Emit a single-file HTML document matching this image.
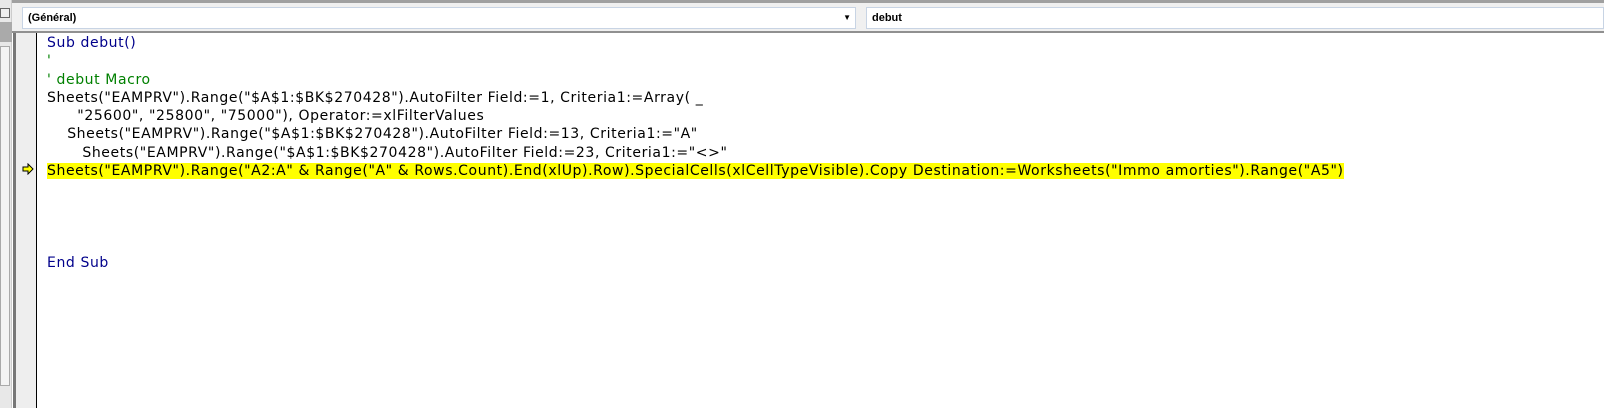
<!DOCTYPE html>
<html><head><style>
*{margin:0;padding:0;box-sizing:border-box}
body{width:1604px;height:408px;overflow:hidden;background:#fff;position:relative;font-family:"DejaVu Sans",Tahoma,sans-serif}
.top{position:absolute;left:12px;top:0;width:1592px;height:33px;background:#f0f0f0;border-top:3px solid #a0a0a0;border-bottom:2px solid #909090}
.dd{position:absolute;top:4px;height:22px;background:#fff;border:1px solid #c8d4e4;font:bold 11px "Liberation Sans",Arial,sans-serif;padding:4px 0 0 5px}
.left{position:absolute;left:0;top:0;width:12px;height:408px;background:#e8e8e8;border-right:1px solid #ccc}
.vl{position:absolute;left:13px;top:33px;width:3px;height:375px;background:#777}
.mar{position:absolute;left:16px;top:33px;width:21px;height:375px;background:#eeeeee;border-right:1px solid #000}
.code{position:absolute;left:47px;top:34px;font-size:14px;letter-spacing:0.6px;line-height:18.3px;white-space:pre;color:#000}
.b{color:#00008b}.g{color:#008000}
.hl{background:#ffff00}
.arrow{position:absolute;left:22px;top:163px;font-size:11px;color:#000}
</style></head><body>
<div class="left"><div style="position:absolute;left:0;top:8px;width:10px;height:10px;border:1px solid #666;background:#eee"></div><div style="position:absolute;left:0;top:22px;width:12px;height:20px;background:#aaa"></div><div style="position:absolute;left:0;top:46px;width:10px;height:340px;border:1px solid #aaa;background:#f4f4f4"></div></div>
<div class="top">
<div class="dd" style="left:10px;width:834px">(Général)<span style="position:absolute;right:4px;top:5px;font-size:8px">▼</span></div>
<div class="dd" style="left:854px;width:738px">debut</div>
</div>
<div class="vl"></div>
<div class="mar"></div>
<div class="arrow"><svg width="12" height="12"><path d="M1 4h5V1l5 5-5 5V8H1z" fill="#ffff00" stroke="#000" stroke-width="1"/></svg></div>
<div class="code"><span class="b">Sub debut()</span>
<span class="g">'</span>
<span class="g">' debut Macro</span>
Sheets("EAMPRV").Range("$A$1:$BK$270428").AutoFilter Field:=1, Criteria1:=Array( _
      "25600", "25800", "75000"), Operator:=xlFilterValues
    Sheets("EAMPRV").Range("$A$1:$BK$270428").AutoFilter Field:=13, Criteria1:="A"
       Sheets("EAMPRV").Range("$A$1:$BK$270428").AutoFilter Field:=23, Criteria1:="&lt;&gt;"
<span class="hl">Sheets("EAMPRV").Range("A2:A" &amp; Range("A" &amp; Rows.Count).End(xlUp).Row).SpecialCells(xlCellTypeVisible).Copy Destination:=Worksheets("Immo amorties").Range("A5")</span>




<span class="b">End Sub</span></div>
</body></html>
